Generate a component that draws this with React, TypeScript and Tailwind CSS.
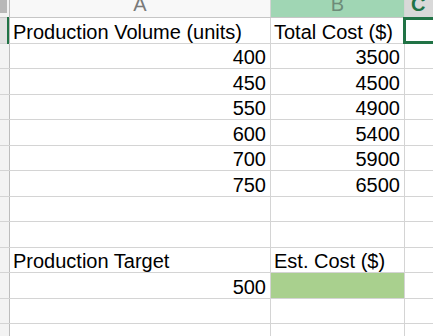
import React from 'react';

type Row = { a?: string; b?: string; aNum?: boolean; bNum?: boolean; fill?: boolean; selected?: boolean };

const rows: Row[] = [
  { a: 'Production Volume (units)', b: 'Total Cost ($)', selected: true },
  { a: '400', b: '3500', aNum: true, bNum: true },
  { a: '450', b: '4500', aNum: true, bNum: true },
  { a: '550', b: '4900', aNum: true, bNum: true },
  { a: '600', b: '5400', aNum: true, bNum: true },
  { a: '700', b: '5900', aNum: true, bNum: true },
  { a: '750', b: '6500', aNum: true, bNum: true },
  {},
  {},
  { a: 'Production Target', b: 'Est. Cost ($)' },
  { a: '500', aNum: true, fill: true },
  {},
  {},
];

function Cell({ text, num, className }: { text?: string; num?: boolean; className: string }) {
  return (
    <div className={`h-full flex items-center overflow-hidden whitespace-nowrap border-r border-[#d4d4d4] ${num ? 'justify-end pr-[4px]' : 'pl-[3px]'} ${className}`}>
      <span className="pt-[3px]">{text}</span>
    </div>
  );
}

export default function App() {
  return (
    <div className="w-[433px] h-[336px] overflow-hidden bg-white text-black text-[20px] leading-none" style={{ fontFamily: '"Liberation Sans", Arial, sans-serif' }}>
      {/* column headers */}
      <div className="flex h-[18px] border-b border-[#c6c6c6] bg-[#f8f8f8] overflow-hidden">
        <div className="w-[10px] shrink-0 bg-[#f3f3f3] border-r border-[#bdbdbd]">
          <div className="w-[7px] h-[13px] bg-[#b8b8b8]" />
        </div>
        <div className="w-[261px] shrink-0 flex justify-center border-r border-[#d4d4d4] text-[#7a7a7a]">
          <span className="-mt-[6px]">A</span>
        </div>
        <div className="w-[134px] shrink-0 flex justify-center border-r border-[#d4d4d4] bg-[#a0d6b4] text-[#6d8c78]">
          <span className="-mt-[6px]">B</span>
        </div>
        <div className="flex-1 bg-[#d9d9d9] text-[#217346] font-bold pl-[6px]">
          <span className="block -mt-[6px]">C</span>
        </div>
      </div>
      {rows.map((r, i) => (
        <div key={i} className="flex h-[25.5px] border-b border-[#d4d4d4]">
          <div className={`w-[10px] shrink-0 h-full border-r border-[#bdbdbd] ${r.selected ? 'bg-[#e2e2e2]' : 'bg-[#f3f3f3]'}`}>
            {r.selected && <div className="ml-[7px] w-[2px] h-[27px] -mt-px bg-[#217346]" />}
          </div>
          <Cell text={r.a} num={r.aNum} className="w-[261px] shrink-0" />
          <Cell text={r.b} num={r.bNum} className={`w-[134px] shrink-0 ${r.fill ? 'bg-[#a9d08e]' : ''}`} />
          <div className="flex-1 relative">
            {r.selected && <div className="absolute -top-px -left-[2px] w-[40px] h-[27px] border-[3px] border-[#217346]" />}
          </div>
        </div>
      ))}
    </div>
  );
}
